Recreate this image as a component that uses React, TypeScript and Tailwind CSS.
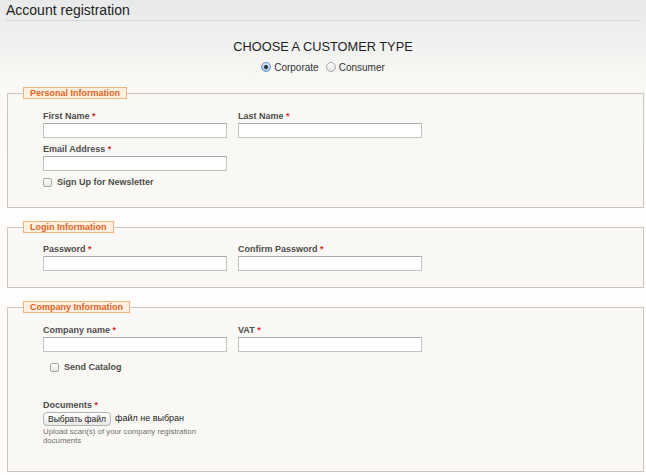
import React from "react";

const Label: React.FC<{ text: string }> = ({ text }) => (
  <div className="text-[9px] font-bold leading-[13px] text-[#4d4d4d]">
    {text} <span className="text-[#d42a2a]">*</span>
  </div>
);

const Field: React.FC<{ label: string; type?: string }> = ({ label, type = "text" }) => (
  <div className="flex flex-col">
    <Label text={label} />
    <input
      type={type}
      className="h-[15px] w-[184px] border border-[#c3c3c3] border-t-[#a9a9a9] bg-white outline-none"
    />
  </div>
);

const Checkbox: React.FC<{ label: string }> = ({ label }) => (
  <label className="flex h-[13px] items-center gap-[5px]">
    <span className="h-[9px] w-[9px] rounded-[2px] border border-[#a8a8a8] bg-gradient-to-b from-white to-[#e6e6e6]" />
    <span className="text-[9px] font-bold text-[#4d4d4d]">{label}</span>
  </label>
);

const Radio: React.FC<{ label: string; checked?: boolean }> = ({ label, checked }) => (
  <label className="flex items-center gap-[3px]">
    {checked ? (
      <span className="flex h-[10px] w-[10px] items-center justify-center rounded-full border border-[#6d8fc4] bg-gradient-to-b from-[#d8e6fa] to-[#9cbff0]">
        <span className="h-[4px] w-[4px] rounded-full bg-[#2a2a2a]" />
      </span>
    ) : (
      <span className="h-[10px] w-[10px] rounded-full border border-[#aaaaaa] bg-gradient-to-b from-white to-[#e2e2e2]" />
    )}
    <span className="text-[10px] text-[#333]">{label}</span>
  </label>
);

const Section: React.FC<{ title: string; className?: string; children: React.ReactNode }> = ({
  title,
  className = "",
  children,
}) => (
  <fieldset className={`ml-[7px] mr-[2px] border border-[#cbc7bf] bg-[#faf8f4] px-[15px] ${className}`}>
    <legend className="border border-[#f2b47e] bg-[#fdf0e0] px-[6px] text-[9px] font-bold leading-[10px] text-[#e0621f]">
      {title}
    </legend>
    <div className="pl-[20px]">{children}</div>
  </fieldset>
);

export default function App() {
  return (
    <div className="min-h-[475px] w-full bg-[linear-gradient(to_bottom,#e7e9ea_0px,#f1f2f0_45px,#fbfaf6_95px,#fefdfb_200px)] font-['Liberation_Sans',Arial,sans-serif]">
      <div className="mx-[6px] border-b border-[#d3d4d4] pb-[2px] pt-[2px] text-[14px] leading-[16px] text-[#222]">
        Account registration
      </div>

      <div className="mt-[19px] text-center text-[12.8px] leading-[14px] text-[#1e1e1e]">
        CHOOSE A CUSTOMER TYPE
      </div>
      <div className="mt-[6px] flex h-[14px] items-center justify-center gap-[7px]">
        <Radio label="Corporate" checked />
        <Radio label="Consumer" />
      </div>

      <Section title="Personal Information" className="mt-[13px] pb-[18px]">
        <div className="mt-[11px] grid grid-cols-[184px_184px] gap-x-[11px] gap-y-[5px]">
          <Field label="First Name" />
          <Field label="Last Name" />
          <Field label="Email Address" />
        </div>
        <div className="mt-[5px]">
          <Checkbox label="Sign Up for Newsletter" />
        </div>
      </Section>

      <Section title="Login Information" className="mt-[13px] pb-[16px]">
        <div className="mt-[10px] grid grid-cols-[184px_184px] gap-x-[11px]">
          <Field label="Password" type="password" />
          <Field label="Confirm Password" type="password" />
        </div>
      </Section>

      <Section title="Company Information" className="mt-[13px] pb-[26px]">
        <div className="mt-[11px] grid grid-cols-[184px_184px] gap-x-[11px]">
          <Field label="Company name" />
          <Field label="VAT" />
        </div>
        <div className="mt-[9px] pl-[7px]">
          <Checkbox label="Send Catalog" />
        </div>
        <div className="mt-[25px]">
          <Label text="Documents" />
          <div className="flex h-[14px] items-center gap-[4px]">
            <button className="h-[14px] rounded-[4px] border border-[#b3b3b3] bg-gradient-to-b from-white to-[#e9e9e9] px-[4px] text-[8.5px] leading-[12px] text-[#222]">
              Выбрать файл
            </button>
            <span className="text-[9px] text-[#222]">файл не выбран</span>
          </div>
          <div className="mt-[1px] w-[160px] text-[7.8px] leading-[9px] text-[#6f6f6f]">
            Upload scan(s) of your company registration documents
          </div>
        </div>
      </Section>
    </div>
  );
}
